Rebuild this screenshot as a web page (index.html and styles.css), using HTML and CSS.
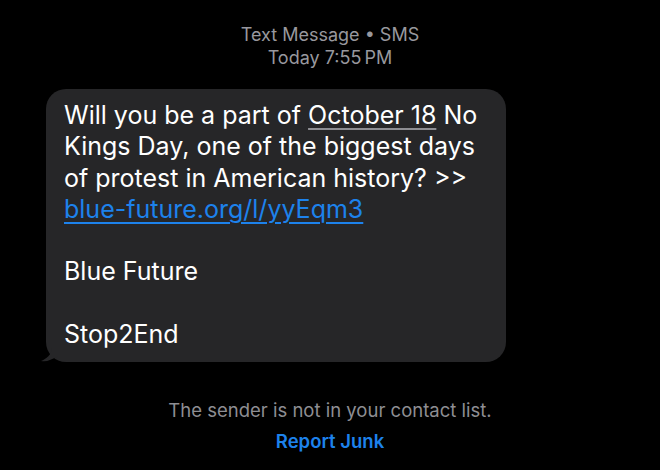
FILE: index.html
```html
<!DOCTYPE html>
<html lang="en">
<head>
  <meta charset="UTF-8">
  <title>Text Message</title>
  <link rel="stylesheet" href="styles.css">
</head>
<body>

  <div class="thread-head">
    <div>Text Message &bull; SMS</div>
    <div>Today 7:55&#8201;PM</div>
  </div>

  <!-- incoming message -->
  <div class="bubble-row">
    <div class="bubble">
      <p>Will you be a part of <span class="date">October 18</span> No Kings Day, one of the biggest days of protest in American history? &gt;&gt; <a href="#" class="link">blue-future.org/l/yyEqm3</a></p>
      <p>Blue Future</p>
      <p>Stop2End</p>
      <svg class="tail" width="22" height="20" viewBox="0 0 22 20">
        <path d="M16 0 L16 4 C16 12 10 16 5 18 C11 19 15 17 22 13 L22 0 Z" fill="#262628"/>
      </svg>
    </div>
  </div>

  <div class="junk">
    <div class="note">The sender is not in your contact list.</div>
    <div class="report">Report Junk</div>
  </div>

</body>
</html>
```

FILE: styles.css
```css
html, body {
  margin: 0;
  background: #000;
}
body {
  width: 660px;
  height: 470px;
  overflow: hidden;
  font-family: Inter, "Noto Sans", sans-serif;
  color: #fff;
}
.thread-head {
  padding-top: 23px;
  text-align: center;
  color: #98989e;
  font-size: 18px;
  line-height: 23px;
}
.bubble-row {
  padding: 20px 0 0 46px;
}
.bubble {
  position: relative;
  width: 460px;
  height: 273px;
  box-sizing: border-box;
  background: #262628;
  border-radius: 20px;
  padding: 11px 16px 11px 18px;
  font-size: 25px;
  line-height: 31.3px;
}
.bubble p {
  margin: 0;
}
.bubble p + p {
  margin-top: 31.3px;
}
.date {
  text-decoration: underline;
  text-decoration-color: #8e8e93;
  text-underline-offset: 4px;
  text-decoration-thickness: 2px;
}
.link {
  color: #1d82ec;
  text-decoration: underline;
  text-decoration-thickness: 2px;
  text-underline-offset: 4px;
}
.tail {
  position: absolute;
  left: -10px;
  bottom: -1px;
}
.junk {
  padding-top: 33px;
  text-align: center;
  font-size: 18.5px;
  line-height: 31px;
}
.note {
  color: #8e8e93;
}
.report {
  color: #1d82ec;
  font-weight: 600;
}
```
